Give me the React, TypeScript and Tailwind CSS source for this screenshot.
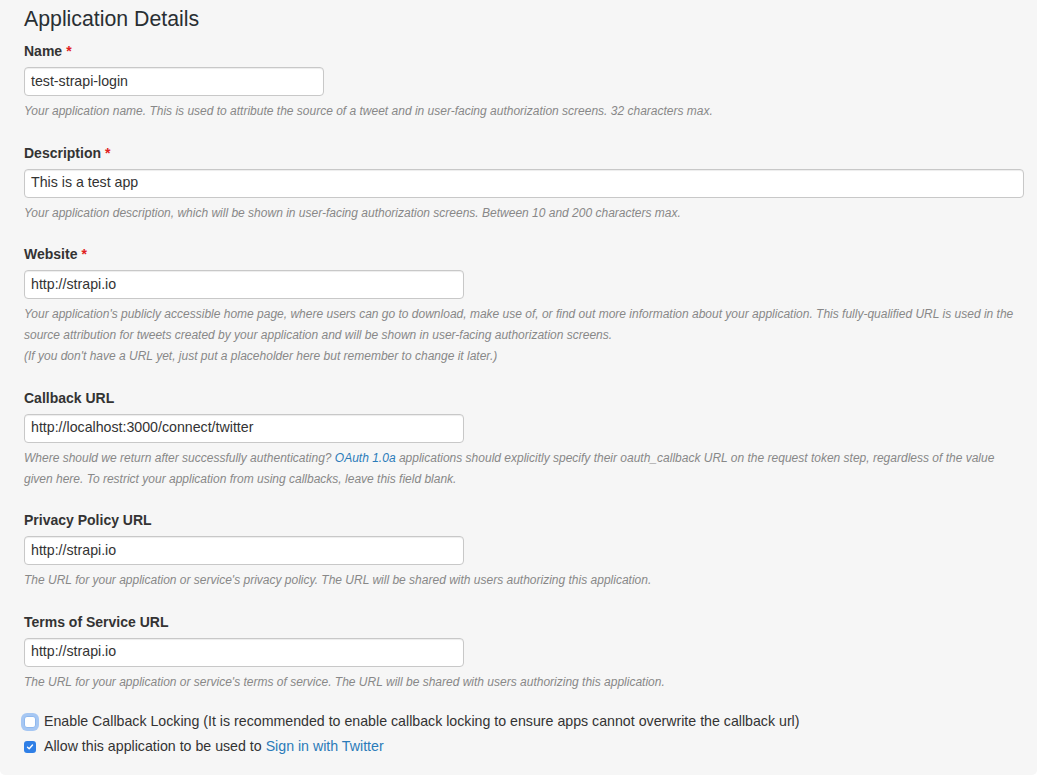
import type { ReactNode } from "react";

const font = { fontFamily: '"Liberation Sans", Arial, Helvetica, sans-serif' };

function Field({
  label,
  required,
  value,
  width,
  help,
}: {
  label: string;
  required?: boolean;
  value: string;
  width: string;
  help: ReactNode[];
}) {
  return (
    <div className="pb-[20.5px]">
      <div className="h-5 text-[14px] leading-5 font-bold text-[#333]">
        {label}
        {required ? <span className="ml-1 text-[#e02020]">*</span> : null}
      </div>
      <div
        className={`mt-[6px] flex h-[29px] items-center rounded-[4px] border border-[#c8c8c8] bg-white px-[6px] text-[14.2px] text-[#333] shadow-[inset_0_1px_1px_rgba(0,0,0,0.075)] ${width}`}
      >
        {value}
      </div>
      <div className="mt-[5px] text-[12px] leading-[21px] italic text-[#888]">
        {help.map((line, i) => (
          <div key={i} className="whitespace-nowrap">
            {line}
          </div>
        ))}
      </div>
    </div>
  );
}

export default function App() {
  return (
    <div className="min-h-[781px] bg-white" style={font}>
      <div className="h-[775px] rounded-b-[5px] bg-[#f6f6f6] px-6 pt-[6px]">
        <h1 className="text-[21.3px] leading-[26px] font-normal text-[#292f33]">Application Details</h1>
        <div className="mt-[9px]">
          <Field
            label="Name"
            required
            value="test-strapi-login"
            width="w-[300px]"
            help={[
              "Your application name. This is used to attribute the source of a tweet and in user-facing authorization screens. 32 characters max.",
            ]}
          />
          <Field
            label="Description"
            required
            value="This is a test app"
            width="w-[1000px]"
            help={[
              "Your application description, which will be shown in user-facing authorization screens. Between 10 and 200 characters max.",
            ]}
          />
          <Field
            label="Website"
            required
            value="http://strapi.io"
            width="w-[440px]"
            help={[
              "Your application's publicly accessible home page, where users can go to download, make use of, or find out more information about your application. This fully-qualified URL is used in the",
              "source attribution for tweets created by your application and will be shown in user-facing authorization screens.",
              "(If you don't have a URL yet, just put a placeholder here but remember to change it later.)",
            ]}
          />
          <Field
            label="Callback URL"
            value="http://localhost:3000/connect/twitter"
            width="w-[440px]"
            help={[
              <>
                Where should we return after successfully authenticating?{" "}
                <a className="text-[#2b7bb9]">OAuth 1.0a</a> applications should explicitly specify their
                oauth_callback URL on the request token step, regardless of the value
              </>,
              "given here. To restrict your application from using callbacks, leave this field blank.",
            ]}
          />
          <Field
            label="Privacy Policy URL"
            value="http://strapi.io"
            width="w-[440px]"
            help={[
              "The URL for your application or service's privacy policy. The URL will be shared with users authorizing this application.",
            ]}
          />
          <Field
            label="Terms of Service URL"
            value="http://strapi.io"
            width="w-[440px]"
            help={[
              "The URL for your application or service's terms of service. The URL will be shared with users authorizing this application.",
            ]}
          />
        </div>
        <div className="-mt-[1px] flex flex-col gap-[5px]">
          <div className="flex h-5 items-center gap-[8px] text-[14.2px] text-[#333]">
            <span className="h-[12px] w-[12px] rounded-[3px] border border-[#8fb8ee] bg-white shadow-[0_0_0_3px_rgba(100,160,240,0.55)]" />
            <span>
              Enable Callback Locking (It is recommended to enable callback locking to ensure apps cannot overwrite
              the callback url)
            </span>
          </div>
          <div className="flex h-5 items-center gap-[8px] text-[14.2px] text-[#333]">
            <span className="flex h-[12px] w-[12px] items-center justify-center rounded-[3px] bg-[#2f7fe6]">
              <svg width="8" height="8" viewBox="0 0 8 8" fill="none">
                <path d="M1.5 4.2 L3.2 5.8 L6.5 2" stroke="white" strokeWidth="1.4" strokeLinecap="round" strokeLinejoin="round" />
              </svg>
            </span>
            <span>
              Allow this application to be used to <a className="text-[#2b7bb9]">Sign in with Twitter</a>
            </span>
          </div>
        </div>
      </div>
    </div>
  );
}
